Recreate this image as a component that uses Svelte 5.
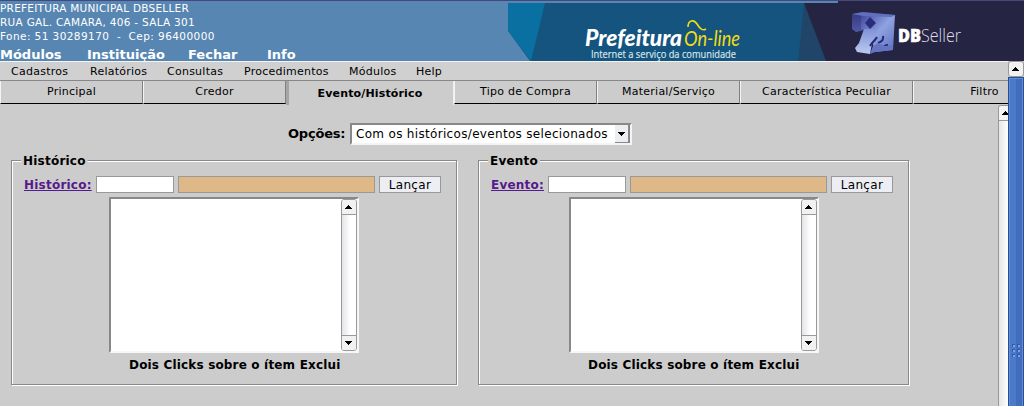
<script>
  const address = [['PREFEITURA MUNICIPAL DBSELLER', 0.25], ['RUA GAL. CAMARA, 406 - SALA 301', 0.29], ['Fone: 51 30289170  -  Cep: 96400000', 0.42]];
  const topMenu = [['Módulos', 87], ['Instituição', 101], ['Fechar', 79], ['Info', 40]];
  const menu = [['Cadastros', 79], ['Relatórios', 77], ['Consultas', 77], ['Procedimentos', 105], ['Módulos', 67], ['Help', 40]];
  const tabs = [['Principal', 143], ['Credor', 143], ['Evento/Histórico', 168], ['Tipo de Compra', 143], ['Material/Serviço', 143], ['Característica Peculiar', 173], ['Filtro', 143]];
  const panels = [['Histórico', 447, 97, 72, 117], ['Evento', 432, 90, 57, 109]];
</script>

{#snippet arrow(down)}
  <svg width="7" height="4" viewBox="0 0 7 4" shape-rendering="crispEdges">
    <path d={down ? 'M0 0h7v1h-1v1h-1v1h-1v1h-1v-1h-1v-1h-1v-1h-1z' : 'M3 0h1v1h1v1h1v1h1v1h-7v-1h1v-1h1v-1h1z'} />
  </svg>
{/snippet}

<div class="screen">
  <header>
    <div class="info">
      <div class="address">{#each address as [line, gap]}<p style:letter-spacing="{gap}px">{line}</p>{/each}</div>
      <nav>{#each topMenu as [label, w]}<b style:width="{w}px">{label}</b>{/each}</nav>
    </div>
    <svg class="banner" width="516" height="61" viewBox="508 0 516 61">
      <defs>
        <linearGradient id="face" x1="0" y1="0" x2="1" y2="1"><stop stop-color="#3c459c" /><stop offset=".5" stop-color="#8fa2e0" /><stop offset="1" stop-color="#5a6fc0" /></linearGradient>
        <linearGradient id="side" x1="0" y1="0" x2="0" y2="1"><stop stop-color="#34377c" /><stop offset="1" stop-color="#5058a6" /></linearGradient>
        <linearGradient id="leg" x1="0" y1="0" x2="0" y2="1"><stop stop-color="#7f92d6" /><stop offset="1" stop-color="#bccbf2" /></linearGradient>
      </defs>
      <path fill="#14547e" d="M508 3h330v58H508z" />
      <path fill="#0a70a2" d="M508 3h37l-14 58L508 31z" />
      <path fill="#5786b3" d="M508 31v30h22z" />
      <path fill="#262443" d="M804 3h220v58H804z" />
      <path fill="#204568" d="M804 3l22 58h-28z" />
      <path fill="#14547e" d="M780 3h24l-6 58h-18z" />
      <path fill="#5786b3" d="M508 1h330v2H508z" />
      <path fill="#262443" d="M838 1h186v3H838z" />
      <path fill="#46477c" d="M508 0h516v1H508z" />
      <g font-family="Lato">
        <text x="585" y="46" font-size="22" font-weight="900" font-style="italic" fill="#fff" textLength="97" lengthAdjust="spacingAndGlyphs">Prefeitura</text>
        <text x="684" y="46" font-size="22" font-style="italic" fill="#f2dc13" textLength="56" lengthAdjust="spacingAndGlyphs">On-line</text>
        <text x="591" y="57.5" font-family="Open Sans" font-size="10" fill="#dce8ee" stroke="#dce8ee" stroke-width=".15" textLength="145" lengthAdjust="spacingAndGlyphs">Internet a serviço da comunidade</text>
      </g>
      <path d="M688 27c0-7 6-8 9-3s6 7 9 5" fill="none" stroke="#f2dc13" stroke-width="1.6" />
      <path fill="url(#side)" d="M852 14l10-2 3 18-9 2-4-3z" />
      <path fill="url(#face)" d="M861 14l34 1-2 35-18 2-6-22-8-1z" />
      <path fill="url(#leg)" d="M864 29h12l-3 9-3 16-13-2-2-4 4-5z" />
      <path fill="#6070bd" d="M852 14l11-2 33 3-5 2-28-1z" />
      <path fill="#2b2c7c" d="M865 23l5-6 6 6-6 6z" />
      <path d="M870 46c2-4 5-5 7-9M878 43c3-1 6-3 5-7M881 50c2-3 4-5 7-5" fill="none" stroke="#27296f" stroke-width="2" />
      <path fill="#6475c3" d="M870 54l3-8 5-3 7 3 8-1v5l-18 2z" />
      <text x="898" y="42" font-family="Open Sans" font-size="18" font-weight="800" fill="#fff" stroke="#fff" stroke-width=".5" textLength="23" lengthAdjust="spacingAndGlyphs">DB</text>
      <text x="921" y="42" font-family="Open Sans" font-size="18" font-weight="300" fill="#dedee9" textLength="40" lengthAdjust="spacingAndGlyphs">Seller</text>
    </svg>
  </header>
  <div class="body">
    <div class="frame">
      <nav class="menubar">{#each menu as [label, w]}<span style:width="{w}px">{label}</span>{/each}</nav>
      <div class="tabs">{#each tabs as [label, w], i}<div class="tab" class:active={i === 2} style:width="{w}px">{label}</div>{/each}</div>
      <div class="inner">
        <main>
          <div class="options"><b>Opções:</b><div class="select"><span>Com os históricos/eventos selecionados</span><i>{@render arrow(true)}</i></div></div>
          <div class="panels">
            {#each panels as [label, w, list, lab, note]}
              <section style:width="{w}px">
                <div class="box"></div>
                <h2>{label}</h2>
                <div class="row"><a href="#top" style:width="{lab}px">{label}:</a><div class="field"></div><div class="field tan"></div><button>Lançar</button></div>
                <div class="list" style:margin-left="{list + 1}px"><div class="bar"><i>{@render arrow(false)}</i><em></em><i class="last">{@render arrow(true)}</i></div></div>
                <p style:padding-left="{note + 1}px">Dois Clicks sobre o ítem Exclui</p>
              </section>
            {/each}
          </div>
        </main>
        <div class="innerbar"><i>{@render arrow(false)}</i></div>
      </div>
    </div>
    <div class="scroll">
      <i>{@render arrow(false)}</i>
      <div class="thumb"><div class="grip">{#each Array(6) as _}<s></s>{/each}</div></div>
    </div>
  </div>
</div>

<style>
  :global(body) { margin: 0; }
  * { box-sizing: border-box; }
  .screen { width: 1024px; height: 406px; overflow: hidden; background: #ccc; font: 11px "DejaVu Sans", sans-serif; color: #000; }
  p, h2 { margin: 0; }
  i { font-style: normal; }
  svg { display: block; flex: none; }
  header { height: 61px; display: flex; background: #5786b3; }
  .info { width: 508px; border-top: 1px solid #46477c; }
  .address { height: 47px; color: #fff; font-size: 10.5px; }
  .address p { line-height: 14px; white-space: pre; }
  .info nav { display: flex; color: #fff; font-size: 13px; line-height: 14px; height: 13px; white-space: nowrap; }
  .info nav b { flex: none; }
  .body { display: flex; height: 345px; }
  .frame { width: 1008px; height: 345px; display: flex; flex-direction: column; overflow: hidden; }
  .menubar { height: 20px; flex: none; display: flex; padding-left: 11px; background: #d0d0d0; border-top: 1px solid #f4f4f4; border-bottom: 1px solid #888; line-height: 19px; letter-spacing: .25px; white-space: nowrap; }
  .menubar span { flex: none; }
  .tabs { display: flex; height: 24px; flex: none; }
  .tab { flex: none; height: 23px; border-left: 1px solid #f4f4f4; border-right: 1px solid #808080; border-bottom: 1px solid #000; text-align: center; line-height: 21px; letter-spacing: .25px; white-space: nowrap; }
  .active { height: 24px; border-left: 3px solid #a5a5a5; border-right: 1px solid #f0f0f0; border-bottom: 0; font-weight: bold; line-height: 25px; padding-right: 2px; letter-spacing: .15px; }
  .inner { display: flex; flex: 1; }
  main { width: 998px; padding: 18px 0 0 11px; }
  .options { display: flex; margin-left: 277px; font-size: 13px; line-height: 21px; }
  .options b { width: 62px; letter-spacing: -.2px; }
  .select { width: 282px; height: 22px; display: flex; background: #fff; border: 2px solid #888; border-right-color: #f4f4f4; border-bottom-color: #f4f4f4; padding-left: 4px; font-size: 12px; line-height: 18px; letter-spacing: .32px; white-space: nowrap; }
  .select span { width: 259px; }
  .select i { width: 15px; background: #edeef2; border-right: 2px solid #888; border-bottom: 1px solid #888; display: grid; place-items: center; }
  .panels { display: flex; gap: 20px; margin-top: 8px; }
  section { position: relative; height: 234px; }
  .box { position: absolute; inset: 7px 0 0 0; height: 225px; border: 1px solid #888; box-shadow: inset 1px 1px #fff, 1px 1px #fff; width: calc(100% - 1px); }
  h2 { position: relative; width: max-content; margin-left: 10px; padding: 0 2px; background: #ccc; font-size: 12px; letter-spacing: .22px; line-height: 17px; height: 23px; clip-path: inset(0 0 6px 0); }
  .row { position: relative; display: flex; gap: 4px; padding-left: 13px; height: 17px; }
  .row a { color: #551a8b; font-size: 12px; letter-spacing: .22px; font-weight: bold; line-height: 19px; margin-right: -4px; flex: none; }
  .field { width: 78px; height: 17px; background: #fff; border: 1px solid #999; flex: none; }
  .tan { width: 197px; background: #deb887; }
  button { width: 62px; height: 17px; padding: 0; border: 1px solid #999; background: #edeef3; color: #000; font: 12px/17px "DejaVu Sans", sans-serif; letter-spacing: .3px; }
  .list { position: relative; width: 250px; height: 156px; margin-top: 4px; background: #fff; border: 2px solid #888; border-right-color: #f7f7f7; border-bottom-color: #f7f7f7; display: flex; justify-content: flex-end; }
  .bar { width: 16px; height: 152px; display: flex; flex-direction: column; border: 1px solid #999; border-radius: 3px; background: linear-gradient(90deg, #e4e4e8, #fff 60%); }
  .bar i { height: 15px; display: flex; align-items: center; padding-left: 3px; background: #f1f1f1; border-bottom: 1px solid #999; border-radius: 2px 2px 0 0; }
  .bar em { flex: 1; }
  .bar .last { border-top: 1px solid #999; border-bottom: 0; border-radius: 0 0 2px 2px; }
  section p { position: relative; font-size: 12px; letter-spacing: .17px; font-weight: bold; line-height: 24px; white-space: nowrap; }
  .innerbar { width: 10px; overflow: hidden; border: 1px solid #999; border-width: 1px 0 0 1px; border-top-left-radius: 3px; background: linear-gradient(90deg, #e5e5e5, #fff); }
  .innerbar i { display: flex; height: 15px; padding: 5px 0 0 3px; border-bottom: 1px solid #999; background: #f5f5f5; }
  .scroll { width: 16px; }
  .scroll > i { display: flex; align-items: center; padding-left: 3px; height: 16px; background: #f1f1f1; border: 1px solid #999; border-radius: 3px; }
  .thumb { height: 329px; background: linear-gradient(90deg, #4c7acb 50%, #426dbd 50%); border: 1px solid #2c4d91; border-bottom: 0; box-shadow: inset 1px 1px #5e8ddd, inset -1px 0 #5e8ddd; padding: 266px 0 0 3px; }
  .grip { display: grid; grid-template-columns: 3px 3px; gap: 2px; }
  .grip s { width: 3px; height: 3px; background: #7da3e5; border: 1px solid #3159a5; border-right: 0; border-bottom: 0; }
</style>
